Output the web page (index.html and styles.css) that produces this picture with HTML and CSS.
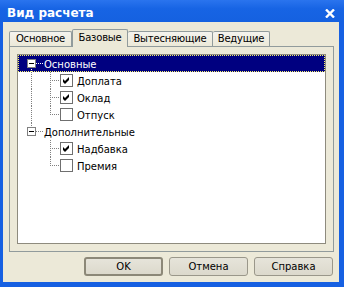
FILE: index.html
```html
<!DOCTYPE html>
<html lang="ru">
<head>
  <meta charset="UTF-8"/>
  <title>Вид расчета</title>
  <link rel="stylesheet" href="styles.css">
</head>
<body>

  <div class="window">
    <!-- TITLE BAR -->
    <div class="titlebar">
      <span class="title">Вид расчета</span>
      <span class="close">
        <svg width="10" height="9" viewBox="0 0 10 9"><path d="M1 0.5 L9 8.5 M9 0.5 L1 8.5" stroke="#fff" stroke-width="2.4"/></svg>
      </span>
    </div>

    <div class="body">
      <!-- TABS -->
      <div class="tabs">
        <div class="tab t-main">Основное</div>
        <div class="tab t-base active">Базовые</div>
        <div class="tab t-push">Вытесняющие</div>
        <div class="tab t-lead">Ведущие</div>
      </div>

      <div class="panel">
        <!-- TREE -->
        <div class="tree">
          <div class="row selected">
            <span class="node first"><span class="exp"></span></span>
            <span class="label">Основные</span>
          </div>
          <div class="row">
            <span class="pipe"></span><span class="branch tee"></span>
            <span class="check on"><svg width="11" height="11" viewBox="0 0 11 11"><polygon points="2,4 4,6 8,2 8,5 4,9 2,7"/></svg></span>
            <span class="label">Доплата</span>
          </div>
          <div class="row">
            <span class="pipe"></span><span class="branch tee"></span>
            <span class="check on"><svg width="11" height="11" viewBox="0 0 11 11"><polygon points="2,4 4,6 8,2 8,5 4,9 2,7"/></svg></span>
            <span class="label">Оклад</span>
          </div>
          <div class="row">
            <span class="pipe"></span><span class="branch corner"></span>
            <span class="check"></span>
            <span class="label">Отпуск</span>
          </div>
          <div class="row">
            <span class="node last"><span class="exp"></span></span>
            <span class="label">Дополнительные</span>
          </div>
          <div class="row">
            <span class="blank"></span><span class="branch tee"></span>
            <span class="check on"><svg width="11" height="11" viewBox="0 0 11 11"><polygon points="2,4 4,6 8,2 8,5 4,9 2,7"/></svg></span>
            <span class="label">Надбавка</span>
          </div>
          <div class="row">
            <span class="blank"></span><span class="branch corner"></span>
            <span class="check"></span>
            <span class="label">Премия</span>
          </div>
        </div>
      </div>

      <!-- BUTTONS -->
      <div class="buttons">
        <button class="btn default">OK</button>
        <button class="btn">Отмена</button>
        <button class="btn">Справка</button>
      </div>
    </div>
  </div>

</body>
</html>
```

FILE: styles.css
```css
body { margin:0; font-family:"DejaVu Sans", sans-serif; font-size:10px; color:#000; }

.window {
  width:344px; height:287px; box-sizing:border-box;
  display:flex; flex-direction:column;
  padding:0 5px 5px 3px;
  background:#1660e2;
}

/* title bar */
.titlebar {
  height:22px; flex:none;
  display:flex; align-items:flex-start; justify-content:space-between;
  margin:0 -5px 0 -3px; padding:0 9px 0 7px;
  background:linear-gradient(#2a74ee, #1764e4 40%, #1561e0);
}
.title { color:#fff; font-weight:bold; font-size:12px; line-height:20px; padding-top:3px; }
.close { display:flex; padding-top:9px; }

.body {
  flex:1; display:flex; flex-direction:column;
  background:#ece9d8;
  padding:0 5px 0 6px;
}

/* tabs */
.tabs { height:24px; display:flex; align-items:flex-end; flex:none; }
.tab {
  height:15px; box-sizing:border-box;
  line-height:14px; text-align:center; letter-spacing:-0.2px;
  border:1px solid #919b9c; border-bottom:none; border-left:none;
  border-radius:2px 2px 0 0;
  background:linear-gradient(#f4f3ee, #ece9d8);
}
.t-main { width:63px; border-left:1px solid #919b9c; }
.t-base { width:56px; }
.t-push { width:85px; }
.t-lead { width:57px; }
.tab.active {
  height:18px; margin-bottom:-1px; line-height:15px;
  border-left:1px solid #919b9c;
  background:#ece9d8; position:relative; z-index:1;
}

.panel {
  height:206px; flex:none; box-sizing:border-box;
  border:1px solid #919b9c; padding:7px;
  display:flex;
}

/* tree */
.tree { flex:1; background:#fff; border:1px solid #8e8b7e; }
.row { height:17px; display:flex; align-items:center; }
.row.selected { background:#000080; color:#fff; outline:1px dotted #f4f06c; outline-offset:-1px; }
.label { line-height:17px; padding-top:1px; height:17px; box-sizing:border-box; }
.check + .label { margin-left:4px; }

.node, .pipe, .blank { width:26px; height:17px; flex:none; }
.branch { width:16px; height:17px; flex:none; }

.node {
  --dot:#808080;
  background-image:
    repeating-linear-gradient(to right, var(--dot) 0 1px, transparent 1px 2px),
    repeating-linear-gradient(to bottom, var(--dot) 0 1px, transparent 1px 2px);
  background-repeat:no-repeat;
  background-size:8px 1px, 1px 9px;
  background-position:18px 8px, 13px 8px;
}
.node.last { background-size:8px 1px, 1px 8px; background-position:18px 8px, 13px 0; }
.selected .node { --dot:#fff; }
.exp {
  display:block; width:9px; height:9px; box-sizing:border-box;
  margin:4px 0 0 9px;
  border:1px solid #808080;
  background:linear-gradient(#000,#000) center/5px 1px no-repeat, #fff;
}

.pipe {
  background:repeating-linear-gradient(to bottom, #808080 0 1px, transparent 1px 2px) 13px 0/1px 17px no-repeat;
}
.branch {
  background-image:
    repeating-linear-gradient(to right, #808080 0 1px, transparent 1px 2px),
    repeating-linear-gradient(to bottom, #808080 0 1px, transparent 1px 2px);
  background-repeat:no-repeat;
  background-position:6px 8px, 6px 0;
}
.branch.tee { background-size:10px 1px, 1px 17px; }
.branch.corner { background-size:10px 1px, 1px 9px; }

.check {
  width:13px; height:13px; box-sizing:border-box; flex:none;
  border:1px solid #6f6f6f; background:#fff;
  display:flex;
}
.check svg { fill:#000; }

/* buttons */
.buttons { display:flex; justify-content:flex-end; gap:6px; margin-top:5px; padding-right:1px; }
.btn {
  width:79px; height:19px; padding:0;
  font:10px "DejaVu Sans", sans-serif; color:#000;
  border:1px solid #9a978a; border-radius:3px;
  background:linear-gradient(#e6e4da, #dcd9cc);
}
.btn.default { border:2px solid #8c8878; }
```
